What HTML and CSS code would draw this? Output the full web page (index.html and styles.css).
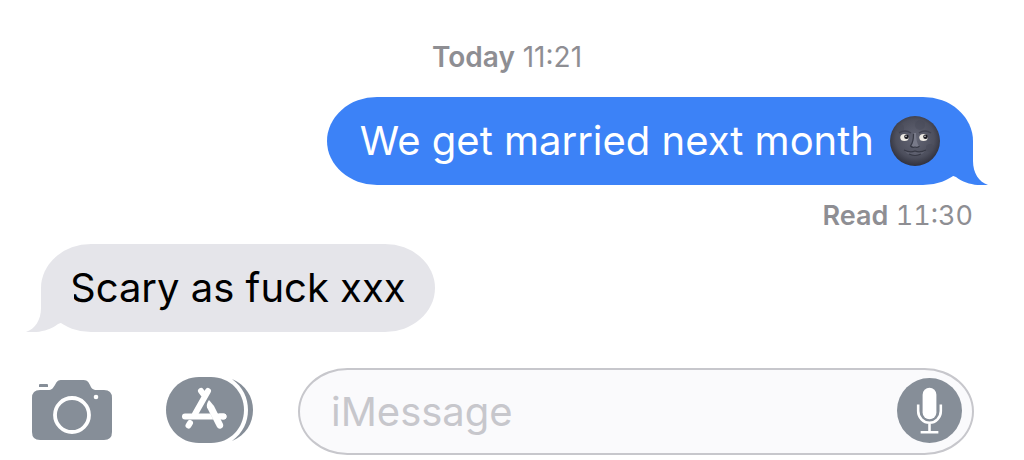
FILE: index.html
```html
<!DOCTYPE html>
<html lang="en">
<head>
<meta charset="utf-8">
<meta name="viewport" content="width=device-width, initial-scale=1">
<title>Messages</title>
<link rel="stylesheet" href="styles.css">
</head>
<body>
<main class="thread">
  <p class="stamp"><strong>Today</strong> <time>11:21</time></p>
  <div class="bubble sent">
    <span>We get married next month</span>
    <svg class="emoji" viewBox="0 0 50 50" role="img" aria-label="New moon face">
      <defs>
        <radialGradient id="moon" cx=".5" cy=".45" r=".55">
          <stop offset="0" stop-color="#646675"/>
          <stop offset=".7" stop-color="#4d4f5d"/>
          <stop offset="1" stop-color="#30313d"/>
        </radialGradient>
      </defs>
      <circle cx="25" cy="25" r="25" fill="url(#moon)"/>
      <circle cx="10" cy="12" r="4" fill="#474957" opacity=".5"/>
      <circle cx="40" cy="32" r="4" fill="#474957" opacity=".5"/>
      <circle cx="30" cy="9" r="5" fill="#474957" opacity=".4"/>
      <path d="M9 17q6-4 12 0M29 17q6-4 12 0" fill="none" stroke="#40424f" stroke-width="1.500"/>
      <path d="M24 17q0 9-3 13 4 3 8 0-3-4-3-13z" fill="#787a89"/>
      <path d="M23.500 18q0 8-3 12 2 2 4.500 1 3 1 4.500-1" fill="none" stroke="#373945" stroke-width="1.200"/>
      <path d="M14 34q6 3 11 1 5 2 11-1-4 6-11 6t-11-6" fill="#5e606f"/>
      <path d="M14 34q6 3 11 1 5 2 11-1M19 38q6 3 12 0" fill="none" stroke="#373945" stroke-width="1.200"/>
      <ellipse cx="14.500" cy="21.500" rx="4.200" ry="3.500" fill="#eeebe4"/>
      <ellipse cx="33.500" cy="21.500" rx="4.200" ry="3.500" fill="#eeebe4"/>
      <circle cx="16.500" cy="20.800" r="2.300" fill="#191920"/>
      <circle cx="35.500" cy="20.800" r="2.300" fill="#191920"/>
      <circle cx="16" cy="20.300" r=".7" fill="#fff"/>
      <circle cx="35" cy="20.300" r=".7" fill="#fff"/>
    </svg>
    <svg class="tail" viewBox="0 0 48 44" aria-hidden="true">
      <path d="M0 0H33V20C33 32 39 41 48 44C37 45 25 43 16 36L0 30Z" fill="currentColor"/>
    </svg>
  </div>
  <p class="receipt"><strong>Read</strong> <time>11:30</time></p>
  <div class="bubble received">
    <span>Scary as fuck xxx</span>
    <svg class="tail" viewBox="0 0 48 44" aria-hidden="true">
      <path d="M0 0H33V20C33 32 39 41 48 44C37 45 25 43 16 36L0 30Z" fill="currentColor"/>
    </svg>
  </div>
</main>
<footer class="composer">
  <button class="icon-button" type="button" aria-label="Camera">
    <svg class="camera" viewBox="0 0 80 60" aria-hidden="true">
      <path d="M8 4h7q1 0 1 1v2H7V5q0-1 1-1z" fill="#868e98"/>
      <path d="M8 10h8c4 0 5-2 7-5 2-4 3-5 7-5h20c5 0 6 1 8 5 1 3 3 5 7 5h7q8 0 8 8v34q0 8-8 8H8q-8 0-8-8V18q0-8 8-8z" fill="#868e98"/>
      <circle cx="40" cy="35" r="17" fill="none" stroke="#fff" stroke-width="3.800"/>
      <circle cx="64" cy="17" r="2.300" fill="#fff"/>
    </svg>
  </button>
  <button class="icon-button" type="button" aria-label="Apps">
    <svg class="apps" viewBox="0 0 88 66" aria-hidden="true">
      <path d="M66 2C80 8 87 20 87 33S80 58 66 64C77 56 82 45 82 33S77 10 66 2z" fill="#868e98"/>
      <path d="M33 0h12C64 0 78 15 78 33S64 66 45 66H33C14 66 0 51 0 33S14 0 33 0z" fill="#868e98"/>
      <g fill="none" stroke="#fff" stroke-width="6" stroke-linecap="round">
        <path d="M35 14l3 4M42 14L29 37"/>
        <path d="M19 39.500H57.500"/>
        <path d="M22.500 48.500l1.500-2.500"/>
      </g>
      <path d="M43.500 26L53 45" stroke="#868e98" stroke-width="8"/>
      <path d="M43 23L48 29 57 47q1 3-2 4.500-2.500 1-4-1.500L41 30.500Q40 27 43 23z" fill="#fff"/>
      <path d="M51 39.500H57.500" stroke="#fff" stroke-width="6" stroke-linecap="round"/>
    </svg>
  </button>
  <div class="field">
    <input class="message-input" type="text" placeholder="iMessage" aria-label="iMessage">
    <button class="mic-button" type="button" aria-label="Dictate">
      <svg class="mic" viewBox="0 0 66 66" aria-hidden="true">
        <circle cx="33" cy="33" r="33" fill="#868e98"/>
        <rect x="26" y="10" width="14" height="32" rx="7" fill="#fff"/>
        <path d="M21.500 27v6.500a11.500 12 0 0 0 23 0V27M33 45.500V54M24 55H42" fill="none" stroke="#fff" stroke-width="2.600"/>
      </svg>
    </button>
  </div>
</footer>
</body>
</html>
```
FILE: styles.css
```css
* {
  box-sizing: border-box;
}

body {
  margin: 0;
  background: #fff;
  color: #000;
  font-family: Inter, "Liberation Sans", sans-serif;
}

.thread {
  display: flex;
  flex-direction: column;
  padding: 40px 51px 0 41px;
}

.stamp,
.receipt {
  margin: 0;
  color: #8e8e93;
  font-size: 28px;
  line-height: 34px;
}

.stamp {
  align-self: center;
  margin-bottom: 23px;
}

.receipt {
  align-self: flex-end;
  margin: 14px 0 11px;
  font-size: 27px;
  font-variant-numeric: tabular-nums;
}

.stamp strong,
.receipt strong {
  font-weight: 600;
}

.bubble {
  position: relative;
  display: flex;
  align-items: center;
  gap: 16px;
  padding: 19px 33px;
  border-radius: 50px / 44px;
  font-size: 40px;
  line-height: 50px;
}

.sent {
  align-self: flex-end;
  background: #3c82f7;
  color: #fff;
}

.received {
  align-self: flex-start;
  padding: 19px 29px;
  background: #e5e5ea;
}

.emoji {
  width: 50px;
  height: 50px;
}

.tail {
  position: absolute;
  right: -15px;
  bottom: 0;
  width: 48px;
  height: 44px;
  color: #3c82f7;
}

.received .tail {
  right: auto;
  left: -15px;
  color: #e5e5ea;
  transform: scaleX(-1);
}

.composer {
  display: flex;
  align-items: center;
  padding: 36px 50px 5px 32px;
}

.icon-button,
.mic-button {
  display: block;
  flex: none;
  padding: 0 0 3px;
  border: 0;
  background: none;
}

.icon-button svg,
.mic {
  display: block;
}

.camera {
  width: 80px;
  height: 60px;
  margin-right: 54px;
}

.apps {
  width: 88px;
  height: 66px;
  margin-right: 44px;
}

.field {
  display: flex;
  flex: 1;
  align-items: center;
  min-width: 0;
  padding: 8px 10px 7px 31px;
  border: 2px solid #c7c7cc;
  border-radius: 50px / 44px;
  background: #fafafc;
}

.message-input {
  flex: 1;
  min-width: 0;
  padding: 0;
  border: 0;
  outline: 0;
  background: none;
  color: #000;
  font: 40px/50px Inter, "Liberation Sans", sans-serif;
}

.message-input::placeholder {
  color: #c7c7cc;
  opacity: 1;
}

.mic {
  width: 65px;
  height: 65px;
}
```
